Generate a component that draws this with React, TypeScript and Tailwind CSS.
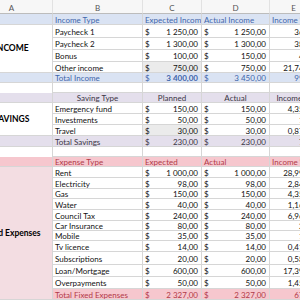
import React from "react";

const G = "border-r border-b border-[#d6d6d6]";

function T({ c = "", children }: { c?: string; children?: React.ReactNode }) {
  return (
    <div className={`flex items-center overflow-hidden whitespace-nowrap px-[2px] pt-[1px] ${G} ${c}`}>
      {children}
    </div>
  );
}

function M({ v, c = "", b = false }: { v: string; c?: string; b?: boolean }) {
  return (
    <div className={`flex items-center justify-between overflow-hidden whitespace-nowrap pl-[2px] pr-[3px] pt-[1px] ${G} ${c}`}>
      <span>$</span>
      <span className={b ? "font-bold" : ""}>{v}</span>
    </div>
  );
}

function P({ v = "", c = "" }: { v?: string; c?: string }) {
  return (
    <div className={`flex items-center justify-end overflow-hidden whitespace-nowrap pr-[7px] pt-[1px] ${G} ${c}`}>
      {v}
    </div>
  );
}

type Row = { name: string; exp: string; act: string; pct: string; gray?: boolean };

const income: Row[] = [
  { name: "Paycheck 1", exp: "1 250,00", act: "1 250,00", pct: "36%" },
  { name: "Paycheck 2", exp: "1 300,00", act: "1 300,00", pct: "38%" },
  { name: "Bonus", exp: "100,00", act: "150,00", pct: "4%" },
  { name: "Other income", exp: "750,00", act: "750,00", pct: "21,74%", gray: true },
];

const savings: Row[] = [
  { name: "Emergency fund", exp: "150,00", act: "150,00", pct: "4,35%" },
  { name: "Investments", exp: "50,00", act: "50,00", pct: "1%" },
  { name: "Travel", exp: "30,00", act: "30,00", pct: "0,87%", gray: true },
];

const expenses: Row[] = [
  { name: "Rent", exp: "1 000,00", act: "1 000,00", pct: "28,99%" },
  { name: "Electricity", exp: "98,00", act: "98,00", pct: "2,84%" },
  { name: "Gas", exp: "150,00", act: "150,00", pct: "4,35%" },
  { name: "Water", exp: "40,00", act: "40,00", pct: "1,16%" },
  { name: "Council Tax", exp: "240,00", act: "240,00", pct: "6,96%" },
  { name: "Car Insurance", exp: "80,00", act: "80,00", pct: "2%" },
  { name: "Mobile", exp: "35,00", act: "35,00", pct: "1%" },
  { name: "Tv licence", exp: "14,00", act: "14,00", pct: "0,41%" },
  { name: "Subscriptions", exp: "20,00", act: "20,00", pct: "0,58%" },
  { name: "Loan/Mortgage", exp: "600,00", act: "600,00", pct: "17,39%" },
  { name: "Overpayments", exp: "50,00", act: "50,00", pct: "1,45%" },
];

function DataRows({ rows }: { rows: Row[] }) {
  return (
    <>
      {rows.map((r) => (
        <React.Fragment key={r.name}>
          <T c="col-start-2">{r.name}</T>
          <M v={r.exp} c={r.gray ? "bg-[#ebebeb]" : ""} />
          <M v={r.act} />
          <P v={r.pct} />
        </React.Fragment>
      ))}
    </>
  );
}

export default function App() {
  const blue = "bg-[#dae3f3] text-[#3f66ab]";
  const purple = "bg-[#e4dfec] text-[#3b3645]";
  const pink = "bg-[#f6c7ce] text-[#b23a48]";
  return (
    <div
      className="w-[300px] h-[300px] overflow-hidden bg-white text-[8px] leading-none text-[#111]"
      style={{ fontFamily: "Lato, 'Liberation Sans', sans-serif" }}
    >
      <div className="ml-[-29px] grid grid-cols-[82px_90px_59px_68px_48px] grid-rows-[14px_11px_13px_12px_12px_11px_10px_10px_10px_11px_11px_11px_11px_10px_10px_11px_11px_10px_11px_11px_10px_10px_11px_13px_12px_12px_11px]">
        {["A", "B", "C", "D", "E"].map((l) => (
          <div
            key={l}
            className="flex items-center justify-center bg-[#f7f7f7] border-r border-b border-r-[#e2e2e2] border-b-[#bcbcbc] text-[#555] pt-[2px]"
          >
            {l}
          </div>
        ))}

        <T c={blue} />
        <T c={blue}>Income Type</T>
        <T c={blue}>Expected Income</T>
        <T c={blue}>Actual Income</T>
        <T c={blue}>Income %</T>

        <div className={`row-span-4 col-start-1 flex items-center justify-center font-bold text-[8.5px] text-black ${G}`}>
          INCOME
        </div>
        <DataRows rows={income} />

        <T c={blue} />
        <T c={blue}>Total Income</T>
        <M v="3 400,00" b c={blue} />
        <M v="3 450,00" c={blue} />
        <P v="99%" c={blue} />

        <T c="border-b-0" />
        <T />
        <T />
        <T />
        <T />

        <T c={purple} />
        <T c={`${purple} justify-center`}>Saving Type</T>
        <T c={`${purple} justify-center`}>Planned</T>
        <T c={`${purple} justify-center`}>Actual</T>
        <T c={`${purple} justify-center`}>Income %</T>

        <div className={`row-span-3 col-start-1 flex items-center justify-center font-bold text-[8.5px] text-black ${G}`}>
          SAVINGS
        </div>
        <DataRows rows={savings} />

        <T c={purple} />
        <T c={purple}>Total Savings</T>
        <M v="230,00" c={purple} />
        <M v="230,00" c={purple} />
        <P v="7%" c={purple} />

        <T c="border-b-0" />
        <T />
        <T />
        <T />
        <T />

        <T c={pink} />
        <T c={pink}>Expense Type</T>
        <T c={pink}>Expected</T>
        <T c={pink}>Actual</T>
        <T c={pink}>Income %</T>

        <div className={`row-span-12 col-start-1 flex items-center justify-center font-bold text-[8.5px] text-black bg-[#f3dde2] ${G}`}>
          Fixed Expenses
        </div>
        <DataRows rows={expenses} />

        <T c={`${pink} col-start-2`}>Total Fixed Expenses</T>
        <M v="2 327,00" c={pink} />
        <M v="2 327,00" c={pink} />
        <P v="67%" c={pink} />
      </div>
    </div>
  );
}
